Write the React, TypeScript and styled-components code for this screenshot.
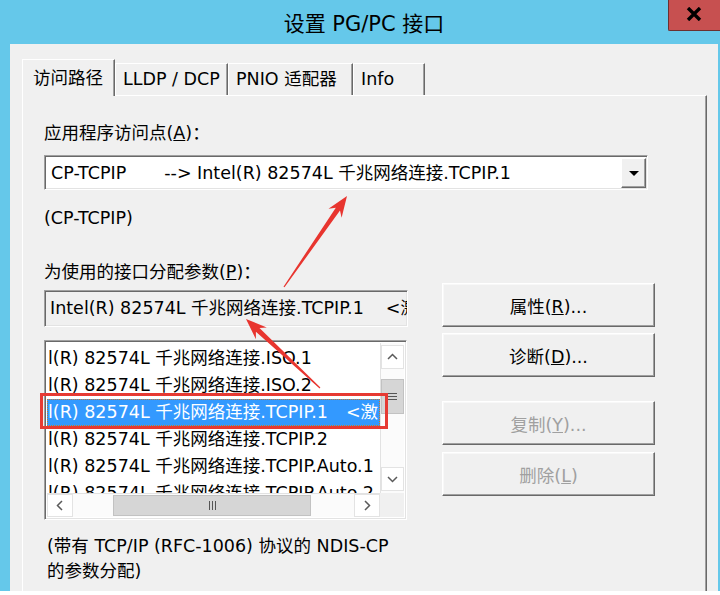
import React from 'react';
import styled, { createGlobalStyle } from 'styled-components';

const GlobalStyle = createGlobalStyle`
  html, body {
    margin: 0;
    padding: 0;
    background: #ffffff;
  }
  body {
    font-family: "DejaVu Sans", "Noto Sans CJK SC", sans-serif;
    font-size: 17.5px;
    color: #000;
  }
`;

const ENTRY = 'Intel(R) 82574L 千兆网络连接';
// the list is scrolled sideways, so its rows show from the "l" of "Intel"
const SHOWN = 'l(R) 82574L 千兆网络连接';

const rows = [
  { name: `${SHOWN}.ISO.1` },
  { name: `${SHOWN}.ISO.2` },
  { name: `${SHOWN}.TCPIP.1`, active: true },
  { name: `${SHOWN}.TCPIP.2` },
  { name: `${SHOWN}.TCPIP.Auto.1` },
  { name: `${SHOWN}.TCPIP.Auto.2` },
];

const tabs = [
  { label: '访问路径', w: 93, active: true },
  { label: 'LLDP / DCP', w: 113 },
  { label: 'PNIO 适配器', w: 125 },
  { label: 'Info', w: 72 },
];

// arrow drawn by a screenshot tool: thin tail, wide swept head
const arrowPoints = (x1: number, y1: number, x2: number, y2: number) => {
  const dx = x2 - x1;
  const dy = y2 - y1;
  const len = Math.hypot(dx, dy);
  const ux = dx / len;
  const uy = dy / len;
  const px = -uy;
  const py = ux;
  const barbX = x2 - ux * 21;
  const barbY = y2 - uy * 21;
  const neckX = x2 - ux * 16;
  const neckY = y2 - uy * 16;
  const pts = [
    [x1 + px * 0.6, y1 + py * 0.6],
    [neckX + px * 2.6, neckY + py * 2.6],
    [barbX + px * 8, barbY + py * 8],
    [x2, y2],
    [barbX - px * 8, barbY - py * 8],
    [neckX - px * 2.6, neckY - py * 2.6],
    [x1 - px * 0.6, y1 - py * 0.6],
  ];
  return pts.map(p => `${p[0].toFixed(1)},${p[1].toFixed(1)}`).join(' ');
};

const Chevron: React.FC<{ dir: 'up' | 'down' | 'left' | 'right' }> = ({ dir }) => {
  const pts = {
    up: '1,7 5.5,2.5 10,7',
    down: '1,3 5.5,7.5 10,3',
    left: '7,1 2.5,5.5 7,10',
    right: '3,1 7.5,5.5 3,10',
  }[dir];
  return (
    <svg width="11" height="11" viewBox="0 0 11 11">
      <polyline points={pts} fill="none" stroke="#5a5a5a" strokeWidth="1.5" />
    </svg>
  );
};

const App: React.FC = () => {
  return (
    <Window>
      <GlobalStyle />
      <TitleBar>
        <Title>设置 PG/PC 接口</Title>
        <CloseButton>
          <svg width="16" height="14" viewBox="0 0 16 14">
            <path d="M2 1 L14 13 M14 1 L2 13" stroke="#000" strokeWidth="3.4" />
          </svg>
        </CloseButton>
      </TitleBar>

      <Client>
        <TabStrip>
          {tabs.map(t => (
            <Tab key={t.label} $w={t.w} $active={t.active}>
              {t.label}
            </Tab>
          ))}
        </TabStrip>

        <Panel>
          <Label>
            应用程序访问点(<u>A</u>)：
          </Label>
          <Combo>
            <ComboText>
              CP-TCPIP<Gap $w={38} />--&gt; {ENTRY}.TCPIP.1
            </ComboText>
            <DropButton>
              <DropArrow />
            </DropButton>
          </Combo>
          <Note>(CP-TCPIP)</Note>

          <Label $top={32}>
            为使用的接口分配参数(<u>P</u>)：
          </Label>

          <Columns>
            <LeftCol>
              <Field>
                {ENTRY}.TCPIP.1<Gap $w={22} />&lt;激
              </Field>

              <ListBox>
                <Rows>
                  {rows.map(r => (
                    <Row key={r.name} $selected={r.active}>
                      {r.name}
                      {r.active && (
                        <>
                          <Gap $w={18} />&lt;激活
                        </>
                      )}
                    </Row>
                  ))}
                </Rows>
                <VScroll>
                  <ArrowBox $h={24}>
                    <Chevron dir="up" />
                  </ArrowBox>
                  <VThumb>
                    <GripH />
                    <GripH />
                    <GripH />
                  </VThumb>
                  <Track />
                  <ArrowBox $h={24}>
                    <Chevron dir="down" />
                  </ArrowBox>
                </VScroll>
                <HScroll>
                  <ArrowBox $w={26}>
                    <Chevron dir="left" />
                  </ArrowBox>
                  <HTrack $w={40} />
                  <HThumb>
                    <GripV />
                    <GripV />
                    <GripV />
                  </HThumb>
                  <Track />
                  <ArrowBox $w={26}>
                    <Chevron dir="right" />
                  </ArrowBox>
                </HScroll>
                <Corner />
              </ListBox>

              <Description>
                (带有 TCP/IP (RFC-1006) 协议的 NDIS-CP
                <br />
                的参数分配)
              </Description>
            </LeftCol>

            <RightCol>
              <ButtonGroup>
                <Button>
                  属性(<u>R</u>)...
                </Button>
                <Button>
                  诊断(<u>D</u>)...
                </Button>
              </ButtonGroup>
              <ButtonGroup $gap={7}>
                <Button disabled $muted>
                  复制(<u>Y</u>)...
                </Button>
                <Button disabled $muted>
                  删除(<u>L</u>)
                </Button>
              </ButtonGroup>
            </RightCol>
          </Columns>
        </Panel>
      </Client>

      <Annotations viewBox="0 0 720 591">
        <rect x="41.5" y="394.5" width="345" height="33" fill="none" stroke="#e63a33" strokeWidth="3" />
        <polygon points={arrowPoints(284, 287, 347, 196)} fill="#e8352f" />
        <polygon points={arrowPoints(320, 388, 246, 319)} fill="#e8352f" />
      </Annotations>
    </Window>
  );
};

const Window = styled.div`
  position: relative;
  width: 720px;
  height: 591px;
  background: #65c8ea;
  display: flex;
  flex-direction: column;
  overflow: hidden;
`;

const TitleBar = styled.div`
  height: 44px;
  display: grid;
  grid-template-columns: 1fr auto 1fr;
  align-items: start;
`;

const Title = styled.div`
  grid-column: 2;
  font-size: 21px;
  line-height: 28px;
  padding-top: 10px;
  margin-left: 8px;
  color: #000;
`;

const CloseButton = styled.div`
  grid-column: 3;
  justify-self: end;
  box-sizing: border-box;
  width: 52px;
  height: 31px;
  background: #c75050;
  border-left: 1px solid #6b3030;
  border-bottom: 1px solid #6b3030;
  border-bottom-left-radius: 2px;
  display: flex;
  align-items: center;
  justify-content: center;
  padding-bottom: 3px;
  padding-right: 2px;
`;

const Client = styled.div`
  flex: 1;
  min-height: 0;
  margin: 0 2px 0 10px;
  background: #f0f0f0;
  padding: 15px 11px 0 12px;
  display: flex;
  flex-direction: column;
  overflow: hidden;
`;

const TabStrip = styled.div`
  height: 36px;
  display: flex;
  align-items: flex-end;
`;

const Tab = styled.div<{ $w: number; $active?: boolean }>`
  box-sizing: border-box;
  width: ${p => p.$w}px;
  height: ${p => (p.$active ? 37 : 32)}px;
  margin-bottom: ${p => (p.$active ? -1 : 0)}px;
  padding: ${p => (p.$active ? '7px 0 0 10px' : '4px 0 0 7px')};
  line-height: 22px;
  white-space: nowrap;
  background: #f0f0f0;
  border-top: 1px solid #ffffff;
  border-left: 1px solid #ffffff;
  border-right: 1px solid #696969;
  box-shadow: inset -1px 0 #a0a0a0;
  position: relative;
  z-index: ${p => (p.$active ? 1 : 0)};
`;

const Panel = styled.div`
  flex: 1;
  min-height: 0;
  border-top: 1px solid #ffffff;
  border-left: 1px solid #ffffff;
  border-right: 1px solid #696969;
  box-shadow: inset -1px 0 #a0a0a0;
  padding: 26px 0 0 21px;
  display: flex;
  flex-direction: column;
  align-items: flex-start;
`;

const Label = styled.div<{ $top?: number }>`
  line-height: 22px;
  margin-top: ${p => p.$top ?? 0}px;
  white-space: nowrap;
`;

const Note = styled.div`
  line-height: 22px;
  margin-top: 17px;
`;

const sunken = `
  box-sizing: border-box;
  border: 1px solid;
  border-color: #a0a0a0 #ffffff #ffffff #a0a0a0;
  box-shadow: inset 1px 1px #696969, inset -1px -1px #e3e3e3;
`;

const Combo = styled.div`
  ${sunken}
  width: 604px;
  height: 35px;
  margin-top: 11px;
  background: #ffffff;
  display: flex;
  align-items: center;
  padding: 1px 1px 1px 2px;
`;

const ComboText = styled.div`
  flex: 1;
  padding-left: 4px;
  white-space: pre;
  overflow: hidden;
  line-height: 30px;
`;

const Gap = styled.span<{ $w: number }>`
  display: inline-block;
  width: ${p => p.$w}px;
`;

const DropButton = styled.div`
  box-sizing: border-box;
  width: 25px;
  height: 30px;
  background: #f0f0f0;
  border: 1px solid;
  border-color: #ffffff #696969 #696969 #ffffff;
  box-shadow: inset -1px -1px #a0a0a0;
  display: flex;
  align-items: center;
  justify-content: center;
`;

const DropArrow = styled.div`
  width: 0;
  height: 0;
  border-left: 5px solid transparent;
  border-right: 5px solid transparent;
  border-top: 5px solid #000;
  margin-top: 1px;
`;

const Columns = styled.div`
  display: flex;
  gap: 34px;
`;

const LeftCol = styled.div`
  width: 364px;
  padding-top: 7px;
  display: flex;
  flex-direction: column;
`;

const Field = styled.div`
  ${sunken}
  height: 37px;
  background: #f0f0f0;
  padding-left: 5px;
  line-height: 35px;
  white-space: pre;
  overflow: hidden;
`;

const ListBox = styled.div`
  ${sunken}
  width: 363px;
  height: 180px;
  margin-top: 13px;
  background: #ffffff;
  padding: 2px;
  display: grid;
  grid-template-columns: 1fr 24px;
  grid-template-rows: 1fr 24px;
`;

const Rows = styled.div`
  overflow: hidden;
  padding-top: 2px;
`;

const Row = styled.div<{ $selected?: boolean }>`
  box-sizing: border-box;
  height: 27px;
  line-height: 25px;
  white-space: pre;
  overflow: hidden;
  padding-left: 0;
  background: ${p => (p.$selected ? '#3399ff' : 'transparent')};
  color: ${p => (p.$selected ? '#ffffff' : '#000')};
  border: 1px dotted ${p => (p.$selected ? '#c8782a' : 'transparent')};
`;

const VScroll = styled.div`
  grid-column: 2;
  grid-row: 1;
  background: #fbfbfb;
  border-left: 1px solid #e2e2e2;
  padding: 2px 0;
  display: flex;
  flex-direction: column;
`;

const HScroll = styled.div`
  grid-column: 1;
  grid-row: 2;
  background: #fbfbfb;
  border-top: 1px solid #e2e2e2;
  display: flex;
`;

const Corner = styled.div`
  grid-column: 2;
  grid-row: 2;
  background: #f0f0f0;
`;

const ArrowBox = styled.div<{ $w?: number; $h?: number }>`
  box-sizing: border-box;
  flex: none;
  width: ${p => (p.$w ? `${p.$w}px` : 'auto')};
  height: ${p => (p.$h ? `${p.$h}px` : 'auto')};
  background: #ffffff;
  border: 1px solid #e3e3e3;
  display: flex;
  align-items: center;
  justify-content: center;
`;

const Track = styled.div`
  flex: 1;
`;

const HTrack = styled.div<{ $w: number }>`
  flex: none;
  width: ${p => p.$w}px;
`;

const VThumb = styled.div`
  box-sizing: border-box;
  flex: none;
  height: 35px;
  margin-top: 10px;
  background: #d6d6d6;
  border: 1px solid #c2c2c2;
  display: flex;
  flex-direction: column;
  align-items: center;
  justify-content: center;
  gap: 2px;
`;

const HThumb = styled.div`
  box-sizing: border-box;
  flex: none;
  width: 198px;
  margin: 1px 0;
  background: #d6d6d6;
  border: 1px solid #c2c2c2;
  display: flex;
  align-items: center;
  justify-content: center;
  gap: 2px;
`;

const GripH = styled.div`
  width: 9px;
  height: 1px;
  background: #555555;
`;

const GripV = styled.div`
  width: 1px;
  height: 9px;
  background: #555555;
`;

const Description = styled.div`
  margin-top: 14px;
  padding-left: 3px;
  line-height: 25px;
  white-space: nowrap;
`;

const RightCol = styled.div`
  width: 213px;
  display: flex;
  flex-direction: column;
  gap: 24px;
`;

const ButtonGroup = styled.div<{ $gap?: number }>`
  display: flex;
  flex-direction: column;
  gap: ${p => p.$gap ?? 6}px;
`;

const Button = styled.button<{ $muted?: boolean }>`
  box-sizing: border-box;
  width: 213px;
  height: 44px;
  padding: 0;
  background: #f0f0f0;
  border: 1px solid;
  border-color: #ffffff #696969 #696969 #ffffff;
  box-shadow: inset -1px -1px #a0a0a0, inset 1px 1px #f8f8f8;
  font-family: inherit;
  font-size: 17.5px;
  color: ${p => (p.$muted ? '#a0a0a0' : '#000')};
`;

const Annotations = styled.svg`
  position: absolute;
  left: 0;
  top: 0;
  width: 720px;
  height: 591px;
  pointer-events: none;
`;

export default App;
